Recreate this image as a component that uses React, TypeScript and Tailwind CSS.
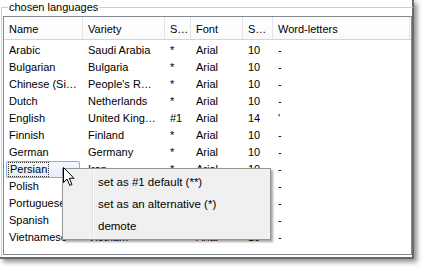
import React from "react";

type Row = [string, string, string, string, string, string];

// cells under the context menu are hidden in the screenshot, so they stay empty
const rows: Row[] = [
  ["Arabic", "Saudi Arabia", "*", "Arial", "10", "-"],
  ["Bulgarian", "Bulgaria", "*", "Arial", "10", "-"],
  ["Chinese (Si…", "People's R…", "*", "Arial", "10", "-"],
  ["Dutch", "Netherlands", "*", "Arial", "10", "-"],
  ["English", "United King…", "#1", "Arial", "14", "'"],
  ["Finnish", "Finland", "*", "Arial", "10", "-"],
  ["German", "Germany", "*", "Arial", "10", "-"],
  ["Persian", "Iran", "*", "Arial", "10", "-"],
  ["Polish", "", "", "", "", "-"],
  ["Portuguese", "", "", "", "", "-"],
  ["Spanish", "", "", "", "", "-"],
  ["Vietnamese", "Vietnam", "*", "Arial", "10", "-"],
];

const widths = ["w-[79px]", "w-[82px]", "w-[26px]", "w-[52px]", "w-[30px]", "w-[137px]"];
const headers = ["Name", "Variety", "S…", "Font", "S…", "Word-letters"];

function Cursor() {
  return (
    <svg width="13" height="20" viewBox="0 0 13 20" className="absolute left-[63px] top-[167px]">
      <path
        d="M0.5 0.5 L0.5 15.5 L4 12 L6.8 18.5 L9 17.5 L6.3 11.3 L11 11.3 Z"
        fill="#fff"
        stroke="#000"
        strokeWidth="1"
      />
    </svg>
  );
}

function ContextMenu() {
  const items = ["set as #1 default (**)", "set as an alternative (*)", "demote"];
  return (
    <div className="absolute left-[62px] top-[168px] w-[209px] h-[72px] bg-[#f0f0f0] border border-[#979797] shadow-[2px_2px_2px_rgba(0,0,0,0.35)] pt-[3px] font-['Liberation_Sans',sans-serif] text-[11.5px] text-black">
      <div className="absolute left-[29px] top-[2px] bottom-[2px] w-px bg-[#e2e3e3]" />
      <div className="absolute left-[30px] top-[2px] bottom-[2px] w-px bg-white" />
      {items.map((t) => (
        <div key={t} className="h-[22px] flex items-center pl-[35px]">
          {t}
        </div>
      ))}
    </div>
  );
}

export default function App() {
  return (
    <div className="w-[430px] h-[275px] bg-white relative font-['Liberation_Sans',sans-serif] text-[11px] text-black">
      <div className="w-[414px] h-[259px] border-r-2 border-b-2 border-[#6a6a6a] shadow-[3px_3px_5px_rgba(0,0,0,0.45)]">
        <fieldset className="ml-[1px] w-[412px] h-[257px] border-l border-t border-[#c9cfd6] pl-[1px]">
          <legend className="ml-[5px] px-px leading-[14px] text-[11px] text-black">chosen languages</legend>
          <div className="mt-[2px] w-[409px] h-[239px] border border-[#828790] bg-white overflow-hidden">
            <div className="flex h-[23px] border-b border-[#d5d5d5] bg-gradient-to-b from-white to-[#fafafa]">
              {headers.map((h, i) => (
                <div
                  key={i}
                  className={`${widths[i]} shrink-0 flex items-center pl-[5px] pt-[2px] border-r border-[#e5e5e5] overflow-hidden whitespace-nowrap`}
                >
                  {h}
                </div>
              ))}
              <div className="flex-1" />
            </div>
            <div className="pt-[2px]">
              {rows.map((r) => (
                <div key={r[0]} className="flex h-[17px]">
                  {r.map((c, i) =>
                    i === 0 && c === "Persian" ? (
                      <div key={i} className={`${widths[i]} shrink-0 pl-[2px] flex items-center`}>
                        <div className="w-[74px] h-[17px] rounded-[2px] border border-[#84acdd] bg-gradient-to-b from-[#f4f8fd] to-[#e3eefb] flex items-center pl-[1px]">
                          <span className="border border-dotted border-[#333] px-[1px] leading-[13px]">{c}</span>
                        </div>
                      </div>
                    ) : (
                      <div
                        key={i}
                        className={`${widths[i]} shrink-0 flex items-center pl-[5px] overflow-hidden whitespace-nowrap`}
                      >
                        {c}
                      </div>
                    )
                  )}
                </div>
              ))}
            </div>
          </div>
        </fieldset>
      </div>
      <ContextMenu />
      <Cursor />
    </div>
  );
}
